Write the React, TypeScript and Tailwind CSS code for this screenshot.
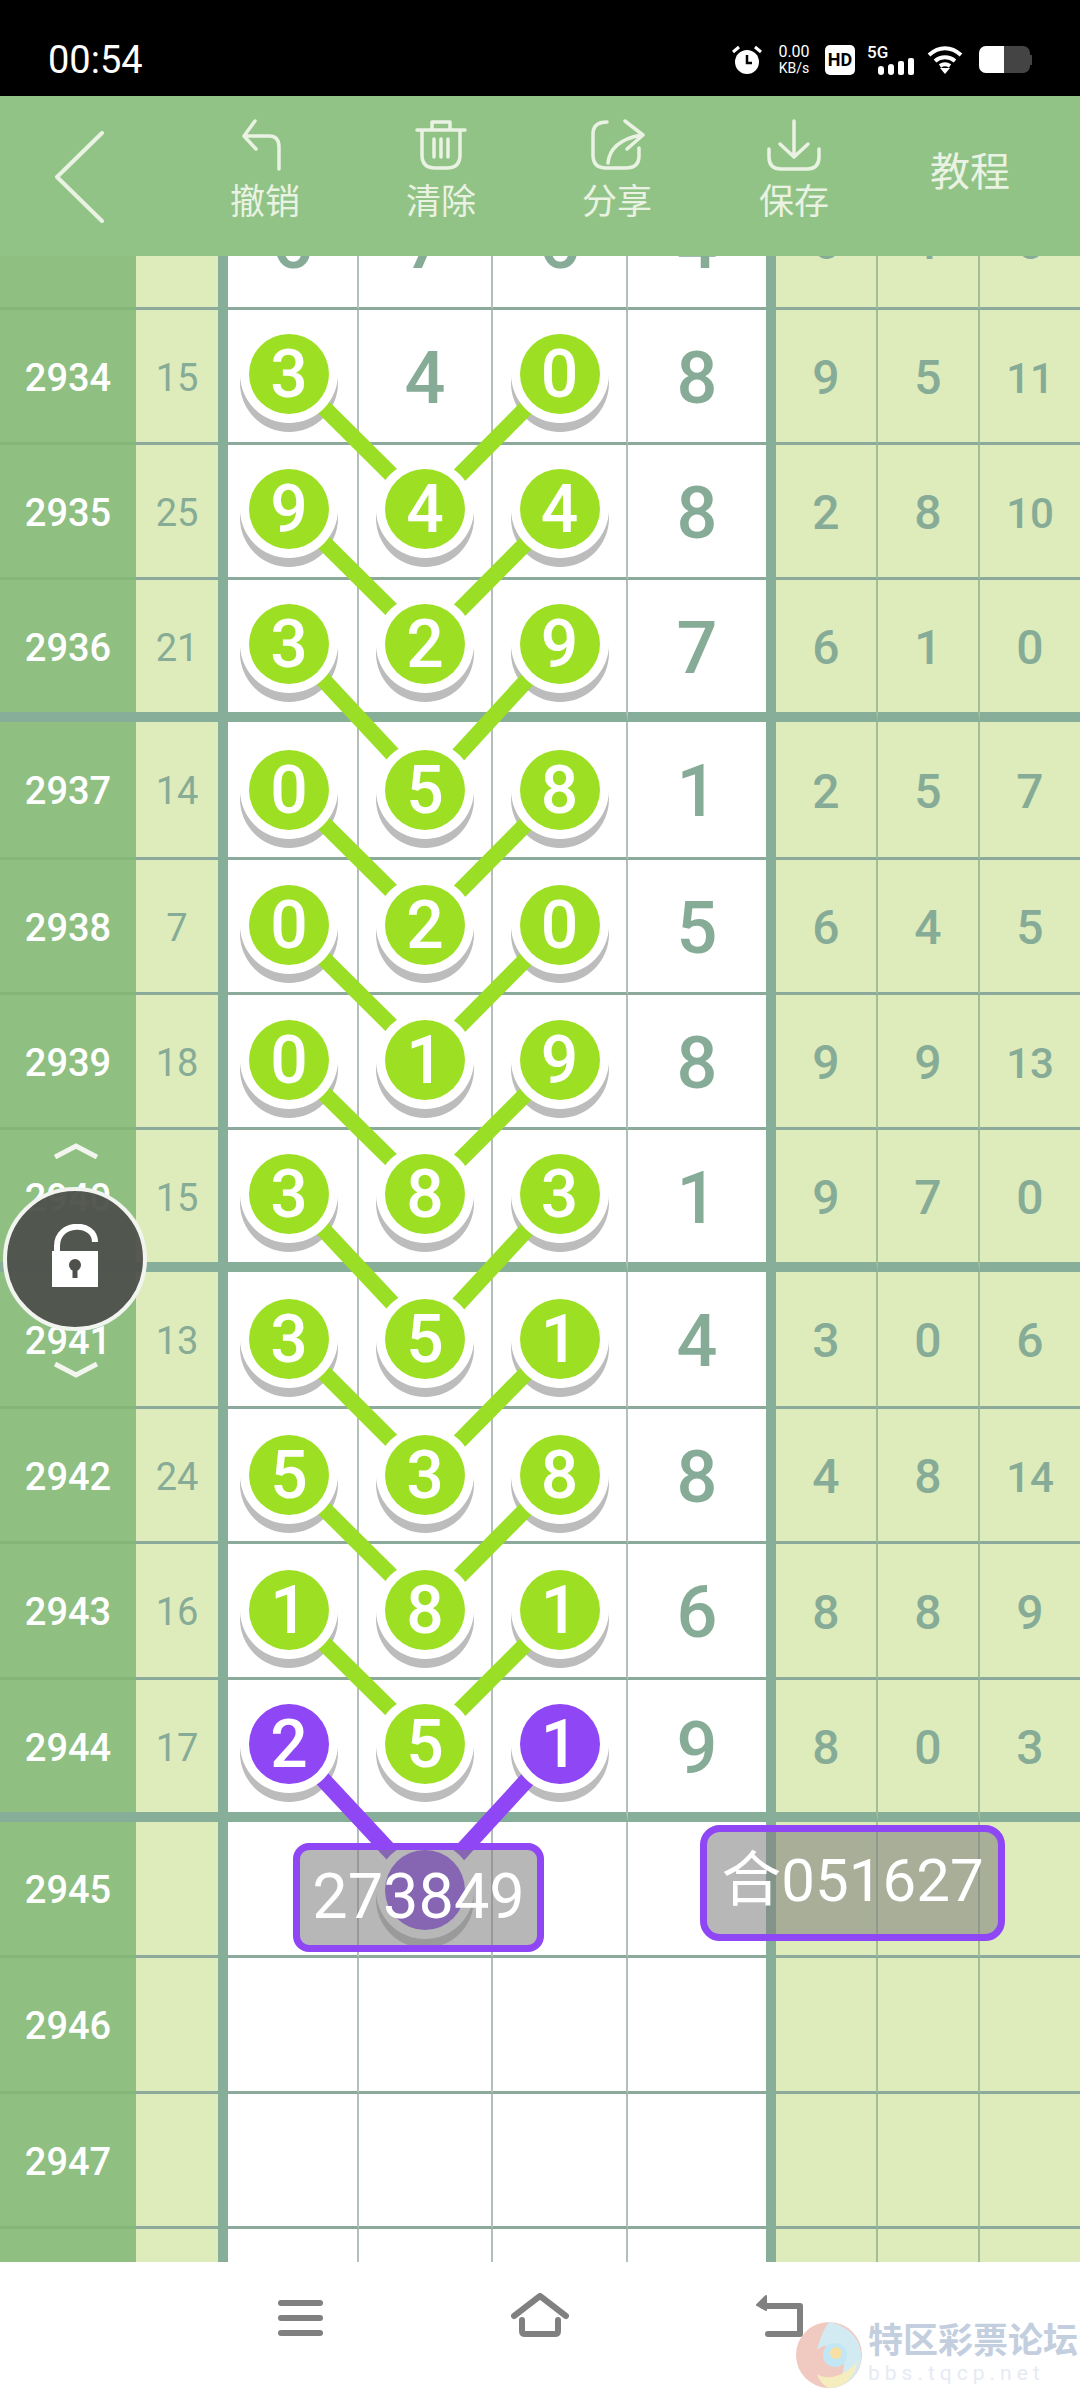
import React from 'react';

const FONT = 'font-["Roboto","Noto_Sans_CJK_SC",sans-serif]';

interface RowData {
    no: number;
    sum?: number;
    cells: (number | null)[];
    right: (number | null)[];
    balls: number[];
    purple?: number[];
    h: string;
    pt: string;
    thick?: boolean;
    y: number;
}

const rows: RowData[] = [
    { no: 2933, sum: 19, cells: [6, 7, 6, 4], right: [6, 1, 6], balls: [], h: 'h-[135px]', pt: 'pt-[15px]', y: 0 },
    { no: 2934, sum: 15, cells: [3, 4, 0, 8], right: [9, 5, 11], balls: [0, 2], h: 'h-[135px]', pt: 'pt-[15px]', y: 374 },
    { no: 2935, sum: 25, cells: [9, 4, 4, 8], right: [2, 8, 10], balls: [0, 1, 2], h: 'h-[135px]', pt: 'pt-[15px]', y: 509 },
    { no: 2936, sum: 21, cells: [3, 2, 9, 7], right: [6, 1, 0], balls: [0, 1, 2], h: 'h-[142px]', pt: 'pt-[15px]', thick: true, y: 644 },
    { no: 2937, sum: 14, cells: [0, 5, 8, 1], right: [2, 5, 7], balls: [0, 1, 2], h: 'h-[138px]', pt: 'pt-[19px]', y: 790 },
    { no: 2938, sum: 7, cells: [0, 2, 0, 5], right: [6, 4, 5], balls: [0, 1, 2], h: 'h-[135px]', pt: 'pt-[16px]', y: 925 },
    { no: 2939, sum: 18, cells: [0, 1, 9, 8], right: [9, 9, 13], balls: [0, 1, 2], h: 'h-[135px]', pt: 'pt-[16px]', y: 1060 },
    { no: 2940, sum: 15, cells: [3, 8, 3, 1], right: [9, 7, 0], balls: [0, 1, 2], h: 'h-[142px]', pt: 'pt-[15px]', thick: true, y: 1194 },
    { no: 2941, sum: 13, cells: [3, 5, 1, 4], right: [3, 0, 6], balls: [0, 1, 2], h: 'h-[137px]', pt: 'pt-[18px]', y: 1339 },
    { no: 2942, sum: 24, cells: [5, 3, 8, 8], right: [4, 8, 14], balls: [0, 1, 2], h: 'h-[135px]', pt: 'pt-[17px]', y: 1475 },
    { no: 2943, sum: 16, cells: [1, 8, 1, 6], right: [8, 8, 9], balls: [0, 1, 2], h: 'h-[136px]', pt: 'pt-[17px]', y: 1610 },
    { no: 2944, sum: 17, cells: [2, 5, 1, 9], right: [8, 0, 3], balls: [0, 1, 2], purple: [0, 2], h: 'h-[142px]', pt: 'pt-[15px]', thick: true, y: 1744 },
    { no: 2945, cells: [null, null, null, null], right: [null, null, null], balls: [1], purple: [1], h: 'h-[136px]', pt: 'pt-[19px]', y: 1890 },
    { no: 2946, cells: [null, null, null, null], right: [null, null, null], balls: [], h: 'h-[136px]', pt: 'pt-[15px]', y: 0 },
    { no: 2947, cells: [null, null, null, null], right: [null, null, null], balls: [], h: 'h-[135px]', pt: 'pt-[15px]', y: 0 },
    { no: 2948, cells: [null, null, null, null], right: [null, null, null], balls: [], h: 'h-[135px]', pt: 'pt-[15px]', y: 0 },
];

const cellWidths = ['w-[131px]', 'w-[134px]', 'w-[135px]', 'w-[138px]'];
const rightWidths = ['w-[102px]', 'w-[102px]', 'w-[100px]'];

const Ball = ({ value, purple, shift }: { value: number | null; purple?: boolean; shift?: boolean }) => (
    <div className={`relative w-[98px] h-[98px] ${shift ? 'mr-[7px]' : ''}`}>
        <div className="absolute left-0 top-[9px] z-0 w-[98px] h-[98px] rounded-full bg-[#bcbcbc]" />
        <div className="relative z-20 w-[98px] h-[98px] rounded-full bg-white flex items-center justify-center">
            <div className={`w-[80px] h-[80px] rounded-full flex items-center justify-center pt-[2px] text-white text-[66px] font-medium leading-none ${purple ? 'bg-[#8f46f5]' : 'bg-[#9de023]'}`}>
                {value}
            </div>
        </div>
    </div>
);

const Row = ({ row }: { row: RowData }) => {
    const border = row.thick ? 'border-b-[10px] border-[#87ae98]' : 'border-b-[3px] border-[#8caa9c]';
    return (
        <div className={`flex ${row.h}`}>
            <div className={`w-[136px] flex items-center justify-center pt-[4px] text-white text-[38px] font-medium bg-[#8fc082] ${row.thick ? border : 'border-b-[3px] border-[#84b67a]'}`}>
                {row.no}
            </div>
            <div className={`w-[82px] flex items-center justify-center pt-[4px] text-[#86ac97] text-[38px] bg-[#deebba] ${border}`}>
                {row.sum}
            </div>
            <div className="w-[10px] bg-[#87ae98]" />
            {row.cells.map((value, i) => {
                const isBall = row.balls.includes(i);
                return (
                    <div
                        key={i}
                        className={`${cellWidths[i]} flex justify-center bg-white ${i < 3 ? 'border-r-[2px] border-r-[#b4bfba]' : ''} ${border} ${isBall ? row.pt : 'items-center pt-[5px]'}`}
                    >
                        {isBall ? (
                            <Ball value={value} purple={row.purple?.includes(i)} shift={i === 0} />
                        ) : (
                            <span className="text-[#86ac97] text-[72px] font-medium leading-none">{value}</span>
                        )}
                    </div>
                );
            })}
            <div className="w-[10px] bg-[#87ae98]" />
            {row.right.map((value, i) => (
                <div
                    key={i}
                    className={`${rightWidths[i]} flex items-center justify-center pt-[4px] font-medium text-[#86ac97] bg-[#deebba] ${i < 2 ? 'border-r-[2px] border-r-[#a3bd97]' : ''} ${border} ${value !== null && value > 9 ? 'text-[42px]' : 'text-[48px]'}`}
                >
                    {value}
                </div>
            ))}
        </div>
    );
};

// connecting strokes, in page coordinates
const Lines = () => {
    const links: { x1: number; y1: number; y2: number; color: string }[] = [];
    rows.forEach((row, i) => {
        const next = rows[i + 1];
        if (!next || !next.balls.includes(1) || row.y === 0) return;
        const color = row.purple ? '#8f46f5' : '#9ade26';
        links.push({ x1: 290, y1: row.y, y2: next.y, color });
        links.push({ x1: 560, y1: row.y, y2: next.y, color });
    });
    return (
        <svg className="absolute left-0 top-0 z-10" width="1080" height="2006" viewBox="0 256 1080 2006">
            {links.map((l, i) => (
                <line key={i} x1={l.x1} y1={l.y1} x2={426} y2={l.y2} stroke={l.color} strokeWidth="16" />
            ))}
        </svg>
    );
};

const StatusBar = () => (
    <div className="h-[96px] bg-black flex items-center text-white pl-[48px] pr-[48px] pt-[23px] shrink-0">
        <span className="text-[38px] leading-none">00:54</span>
        <div className="ml-auto flex items-center">
            <svg width="32" height="30" viewBox="0 0 32 30">
                <circle cx="16" cy="17" r="12" fill="#fff" />
                <path d="M16 10v8h5" stroke="#000" strokeWidth="2.5" fill="none" />
                <path d="M2 7l6-5M30 7l-6-5" stroke="#fff" strokeWidth="3" />
            </svg>
            <div className="ml-[12px] w-[38px] flex flex-col items-center leading-none">
                <span className="text-[16px] leading-[16px]">0.00</span>
                <span className="text-[14px] leading-[14px] mt-[1px]">KB/s</span>
            </div>
            <div className="ml-[12px] w-[30px] h-[30px] rounded-[5px] bg-white text-black text-[18px] font-bold flex items-center justify-center leading-none">
                HD
            </div>
            <div className="ml-[12px] relative w-[48px] h-[30px]">
                <span className="absolute left-0 -top-[1px] text-[17px] font-medium leading-none">5G</span>
                <svg className="absolute left-[11px] top-[13px]" width="37" height="17" viewBox="0 0 37 17">
                    <rect x="0" y="8" width="6" height="9" rx="3" fill="#fff" />
                    <rect x="10" y="6" width="6" height="11" rx="3" fill="#fff" />
                    <rect x="20" y="3" width="6" height="14" rx="2" fill="#fff" />
                    <rect x="30" y="0" width="6" height="17" rx="2" fill="#fff" />
                </svg>
            </div>
            <svg className="ml-[12px]" width="36" height="28" viewBox="0 0 36 28">
                <path d="M2 9C12 0 24 0 34 9M8 15c6-5 14-5 20 0M13 20c3-2 7-2 10 0" stroke="#fff" strokeWidth="4" fill="none" />
                <path d="M18 28l-5-6h10z" fill="#fff" />
            </svg>
            <div className="ml-[16px] w-[51px] h-[27px] rounded-[7px] bg-[#444444] overflow-hidden">
                <div className="w-[25px] h-[27px] bg-white" />
            </div>
            <div className="w-[2px] h-[10px] bg-[#444444]" />
        </div>
    </div>
);

const ToolButton = ({ label, children, className }: { label: string; children: React.ReactNode; className: string }) => (
    <div className={`w-[72px] flex flex-col items-center ${className}`}>
        <svg width="60" height="52" viewBox="0 0 60 52" fill="none" stroke="#eaf3e3" strokeWidth="3.5" strokeLinecap="round" strokeLinejoin="round">
            {children}
        </svg>
        <span className="text-[35px] leading-[40px] mt-[12px] text-[#eaf3e3]">{label}</span>
    </div>
);

const Toolbar = () => (
    <div className="h-[160px] bg-[#92c386] flex items-start pt-[23px] shrink-0">
        <svg className="ml-[54px] mt-[12px]" width="50" height="92" viewBox="0 0 50 92" fill="none" stroke="#eaf3e3" strokeWidth="4" strokeLinecap="round" strokeLinejoin="round">
            <polyline points="48,2 3,46 48,90" />
        </svg>
        <ToolButton label="撤销" className="ml-[125px]">
            <path d="M27 2L16 17L28 30M17 17H41Q51 17 51 28V50" transform="translate(-7 0)" />
        </ToolButton>
        <ToolButton label="清除" className="ml-[104px]">
            <path d="M6 11H54M21 11V3H39V11M11 11V36Q11 49 24 49H36Q49 49 49 36V11M23 20V38M30 20V38M37 20V38" />
        </ToolButton>
        <ToolButton label="分享" className="ml-[104px]">
            <path d="M20 3Q6 3 6 15V36Q6 49 19 49H39Q52 49 52 37V29M21 44Q23 22 54 16M38 2L56 16L40 30" />
        </ToolButton>
        <ToolButton label="保存" className="ml-[105px]">
            <path d="M30 2V38M16 25L30 38L44 25M5 30V38Q5 50 17 50H43Q55 50 55 38V30" />
        </ToolButton>
        <span className="ml-[100px] mt-[32px] text-[40px] leading-[44px] text-[#eaf3e3]">教程</span>
    </div>
);

const BottomNav = () => (
    <div className="relative h-[126px] bg-white flex items-start pl-[278px] pt-[38px] shrink-0">
        <div className="w-[45px] flex flex-col gap-[9px]">
            <div className="h-[6px] rounded-full bg-[#808080]" />
            <div className="h-[6px] rounded-full bg-[#808080]" />
            <div className="h-[6px] rounded-full bg-[#808080]" />
        </div>
        <svg className="ml-[188px] -mt-[7px]" width="58" height="44" viewBox="0 0 58 44" fill="none" stroke="#808080" strokeWidth="6" strokeLinecap="round" strokeLinejoin="round">
            <path d="M3 23L29 3L55 23M11 27V38Q11 41 14 41H44Q47 41 47 38V27" />
        </svg>
        <svg className="ml-[186px] -mt-[7px]" width="50" height="44" viewBox="0 0 50 44" fill="none" stroke="#808080" strokeWidth="6" strokeLinecap="round" strokeLinejoin="round">
            <path d="M8 13H45V41H13" />
            <path d="M11 3L2 12L11 17Z" fill="#808080" strokeWidth="2" />
        </svg>
        <div className="absolute left-[795px] top-[60px] flex z-10">
            <svg className="opacity-70" width="68" height="66" viewBox="0 0 68 66">
                <ellipse cx="34" cy="33" rx="33" ry="33" fill="#eab4a6" />
                <path d="M34 0C54 4 68 18 66 38C64 54 50 64 38 66C50 54 52 40 44 30C38 22 28 22 22 28C26 12 30 6 34 0Z" fill="#bfe3ef" />
                <path d="M22 52C34 60 52 52 62 40C60 56 48 66 34 66C28 64 24 58 22 52Z" fill="#f3e6a4" />
                <circle cx="40" cy="33" r="12" fill="#a9ddf0" />
                <circle cx="41" cy="31" r="6" fill="#f6d27f" />
            </svg>
            <div className="ml-[5px] flex flex-col">
                <span className="text-[35px] leading-[40px] font-bold text-[#c3cede] whitespace-nowrap">特区彩票论坛</span>
                <span className="text-[21px] leading-[22px] tracking-[5px] text-[#e6eaf4] whitespace-nowrap">bbs.tqcp.net</span>
            </div>
        </div>
    </div>
);

const Lock = () => (
    <div className="absolute left-[3px] top-[931px] z-40 w-[144px] h-[144px] rounded-full bg-[#4e504bf2] border-[4px] border-[#f2f4ef] flex items-center justify-center">
        <svg width="60" height="70" viewBox="0 0 60 70">
            <path d="M12 30V22C12 -3 50 -3 50 18" fill="none" stroke="#fff" strokeWidth="6" />
            <rect x="7" y="27" width="46" height="36" fill="#fff" />
            <circle cx="30" cy="41" r="6" fill="#4e504b" />
            <rect x="27.5" y="41" width="5" height="13" fill="#4e504b" />
        </svg>
    </div>
);

const App = () => (
    <div className={`w-[1080px] h-[2388px] flex flex-col overflow-hidden bg-white ${FONT}`}>
        <StatusBar />
        <Toolbar />
        <div className="relative h-[2006px] overflow-hidden shrink-0">
            <div className="-mt-[81px]">
                {rows.map((row) => (
                    <Row key={row.no} row={row} />
                ))}
            </div>
            <Lines />
            {/* scroll arrows round the lock */}
            <svg className="absolute left-[54px] top-[887px] z-30" width="44" height="16" viewBox="0 0 44 16" fill="none" stroke="#f2f6ee" strokeWidth="5">
                <path d="M1 14L22 3L43 14" />
            </svg>
            <svg className="absolute left-[54px] top-[1106px] z-30" width="44" height="16" viewBox="0 0 44 16" fill="none" stroke="#f2f6ee" strokeWidth="5">
                <path d="M1 2L22 13L43 2" />
            </svg>
            <Lock />
            <div className="absolute left-[293px] top-[1587px] z-30 w-[251px] h-[109px] rounded-[16px] border-[7px] border-[#8f46f5] bg-[#80808090] flex items-center justify-center pb-[3px] text-white text-[63px] leading-none">
                273849
            </div>
            <div className="absolute left-[700px] top-[1569px] z-30 w-[305px] h-[116px] rounded-[20px] border-[7px] border-[#8f46f5] bg-[#80808090] flex items-center justify-center pb-[5px] text-white text-[60px] leading-none">
                合051627
            </div>
        </div>
        <BottomNav />
    </div>
);

export default App;
